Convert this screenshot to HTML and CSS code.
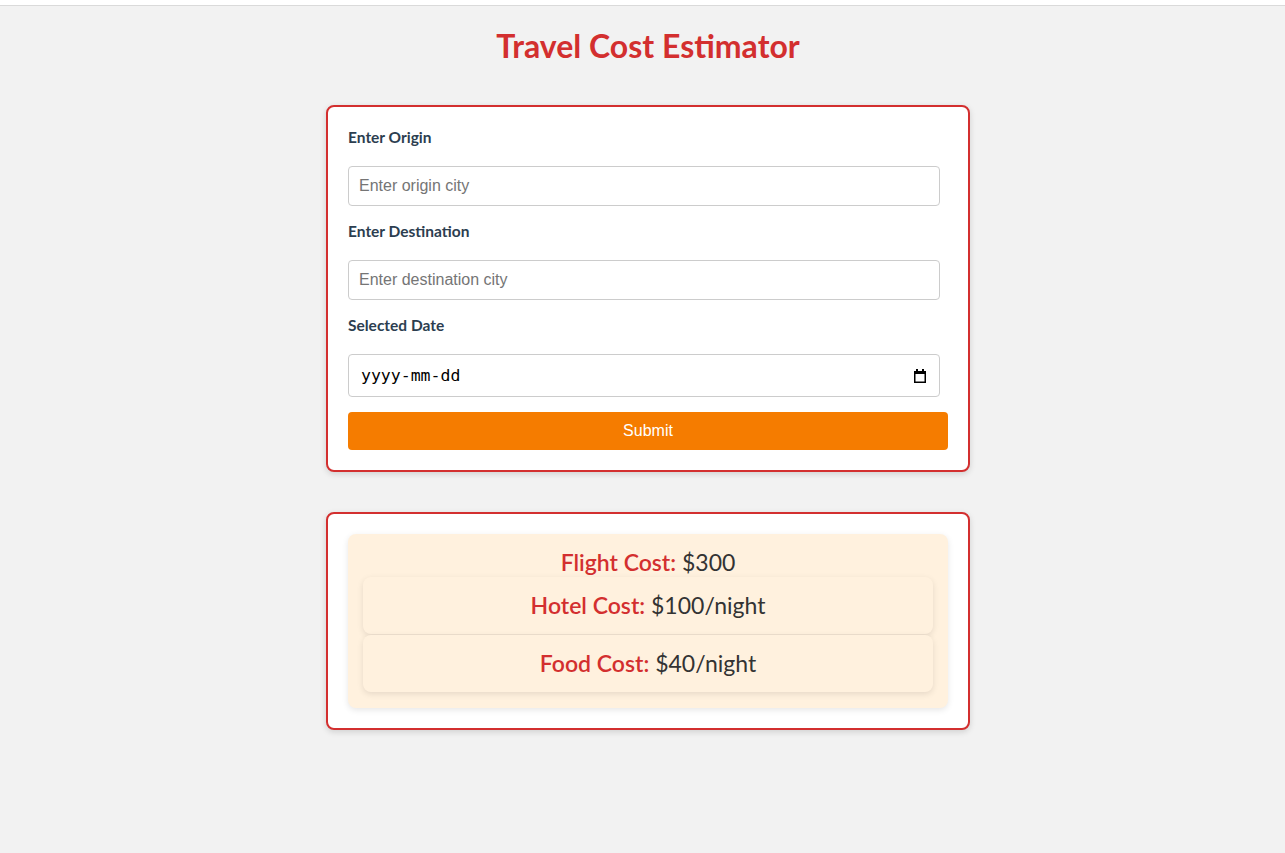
FILE: index.html
```html
<!DOCTYPE html>
<html lang="en">
<head>
<meta charset="utf-8">
<title>Travel Cost Estimator</title>
<link rel="stylesheet" href="styles.css">
</head>
<body>
<div class="topbar"></div>
<main class="page">
  <h1 class="title">Travel Cost Estimator</h1>
  <form class="card form-card">
    <label class="field-label" for="origin">Enter Origin</label>
    <input class="text-input" id="origin" type="text" placeholder="Enter origin city">
    <label class="field-label" for="dest">Enter Destination</label>
    <input class="text-input" id="dest" type="text" placeholder="Enter destination city">
    <label class="field-label" for="date">Selected Date</label>
    <div class="date-wrap">
      <input class="date-input" id="date" type="text" placeholder="yyyy-mm-dd">
      <svg class="cal-icon" width="12" height="14" viewBox="0 0 12 14" aria-hidden="true">
        <rect x="2" y="0" width="2" height="3" fill="#000"/>
        <rect x="8" y="0" width="2" height="3" fill="#000"/>
        <path d="M0.75 2.75h10.5v10.5H0.75z" fill="none" stroke="#000" stroke-width="1.5"/>
        <rect x="0" y="2" width="12" height="3" fill="#000"/>
      </svg>
    </div>
    <button class="submit" type="button">Submit</button>
  </form>
  <section class="card result-card">
    <div class="costs">
      <p class="cost-line"><span class="cost-label">Flight Cost:</span> $300</p>
      <div class="cost-box"><span class="cost-label">Hotel Cost:</span> $100/night</div>
      <div class="cost-box"><span class="cost-label">Food Cost:</span> $40/night</div>
    </div>
  </section>
</main>
</body>
</html>
```

FILE: styles.css
```css
* { box-sizing: border-box; }
html, body { margin: 0; padding: 0; }
body {
  background: #f2f2f2;
  font-family: "Lato", "Open Sans", sans-serif;
  min-height: 853px;
}
.topbar {
  height: 6px;
  background: #ffffff;
  border-bottom: 1px solid #dadada;
}
.page {
  display: flex;
  flex-direction: column;
  align-items: center;
  padding-left: 11px;
}
.title {
  margin: 24px 0 0;
  height: 31px;
  line-height: 31px;
  font-size: 32px;
  font-weight: 700;
  color: #d32f2f;
  text-align: center;
}
.card {
  width: 644px;
  background: #ffffff;
  border: 2px solid #d32f2f;
  border-radius: 8px;
  padding: 20px;
  box-shadow: 0 2px 6px rgba(0, 0, 0, 0.14);
}
.form-card {
  margin-top: 44px;
  display: flex;
  flex-direction: column;
  align-items: flex-start;
}
.field-label {
  display: block;
  height: 20px;
  line-height: 20px;
  font-size: 15.5px;
  font-weight: 700;
  color: #2c3e50;
  margin-bottom: 19px;
}
.text-input {
  width: 592px;
  height: 40px;
  border: 1px solid #cccccc;
  border-radius: 4px;
  padding: 0 10px;
  font-family: "Liberation Sans", Arial, sans-serif;
  font-size: 16px;
  color: #222;
  margin: 0 0 15px;
  background: #fff;
}
.text-input::placeholder { color: #757575; }
.date-wrap {
  position: relative;
  width: 592px;
  height: 43px;
  margin: 0 0 15px;
}
.date-input {
  width: 100%;
  height: 100%;
  border: 1px solid #cccccc;
  border-radius: 4px;
  padding: 0 40px 0 12px;
  font-family: "DejaVu Sans Mono", "Liberation Mono", monospace;
  font-size: 16.5px;
  color: #000;
  background: #fff;
  margin: 0;
}
.date-input::placeholder { color: #000; }
.cal-icon {
  position: absolute;
  right: 14px;
  top: 15px;
}
.submit {
  width: 600px;
  height: 38px;
  border: none;
  border-radius: 4px;
  background: #f57c00;
  color: #ffffff;
  font-family: "Liberation Sans", Arial, sans-serif;
  font-size: 16px;
  cursor: pointer;
}
.result-card {
  margin-top: 40px;
}
.costs {
  background: #fff1de;
  border-radius: 8px;
  padding: 16px 15px 16px;
  box-shadow: 0 2px 6px rgba(0, 0, 0, 0.1);
  display: flex;
  flex-direction: column;
  gap: 1px;
}
.cost-line {
  margin: 0 0 2px;
  height: 24px;
  line-height: 24px;
  font-size: 23px;
  color: #333333;
  text-align: center;
}
.cost-box {
  height: 57px;
  line-height: 57px;
  font-size: 23px;
  color: #333333;
  text-align: center;
  background: #fff1de;
  border-radius: 8px;
  box-shadow: 0 2px 6px rgba(0, 0, 0, 0.1);
}
.cost-label {
  color: #d32f2f;
  font-weight: 600;
}
```
